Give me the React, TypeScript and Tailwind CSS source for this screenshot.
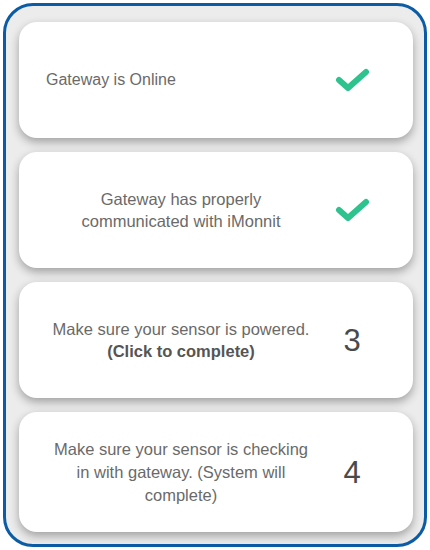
import type { ReactNode } from "react";

const font = { fontFamily: '"Liberation Sans", Arial, sans-serif' };

function Check() {
  return (
    <svg width="36" height="26" viewBox="0 0 36 26" fill="none">
      <polyline
        points="5,13 14,21 32,5"
        stroke="#2ec28f"
        strokeWidth="6"
        strokeLinecap="round"
        strokeLinejoin="round"
      />
    </svg>
  );
}

function Card({
  children,
  side,
  className = "",
}: {
  children: ReactNode;
  side: ReactNode;
  className?: string;
}) {
  return (
    <div
      className={`flex items-center rounded-[18px] bg-white pl-[30px] shadow-[0_4px_10px_rgba(0,0,0,0.32)] ${className}`}
    >
      <div className="w-[264px] text-center text-[16.5px] leading-[22px] text-[#6a6a6a]">
        {children}
      </div>
      <div className="flex w-[78px] items-center justify-center">{side}</div>
    </div>
  );
}

const Num = ({ n }: { n: string }) => (
  <span className="text-[31px] leading-none text-[#4a4a4a]">{n}</span>
);

export default function App() {
  return (
    <div className="h-[550px] w-[430px] bg-white p-[3px]" style={font}>
      <div className="flex h-[544px] w-[424px] flex-col gap-[14px] rounded-[30px] border-[3px] border-[#0b5ca5] bg-[#ececec] pt-[16px] pr-[11px] pb-[12px] pl-[13px]">
        <Card className="h-[116px]" side={<Check />}>
          <p className="-ml-[3px] text-left text-[16px]">Gateway is Online</p>
        </Card>
        <Card className="h-[116px]" side={<Check />}>
          <p>
            Gateway has properly
            <br />
            communicated with iMonnit
          </p>
        </Card>
        <Card className="h-[116px]" side={<Num n="3" />}>
          <p>Make sure your sensor is powered.</p>
          <p className="font-bold text-[#555]">(Click to complete)</p>
        </Card>
        <Card className="flex-1" side={<Num n="4" />}>
          <p className="leading-[23px]">
            Make sure your sensor is checking in with gateway. (System will
            complete)
          </p>
        </Card>
      </div>
    </div>
  );
}
